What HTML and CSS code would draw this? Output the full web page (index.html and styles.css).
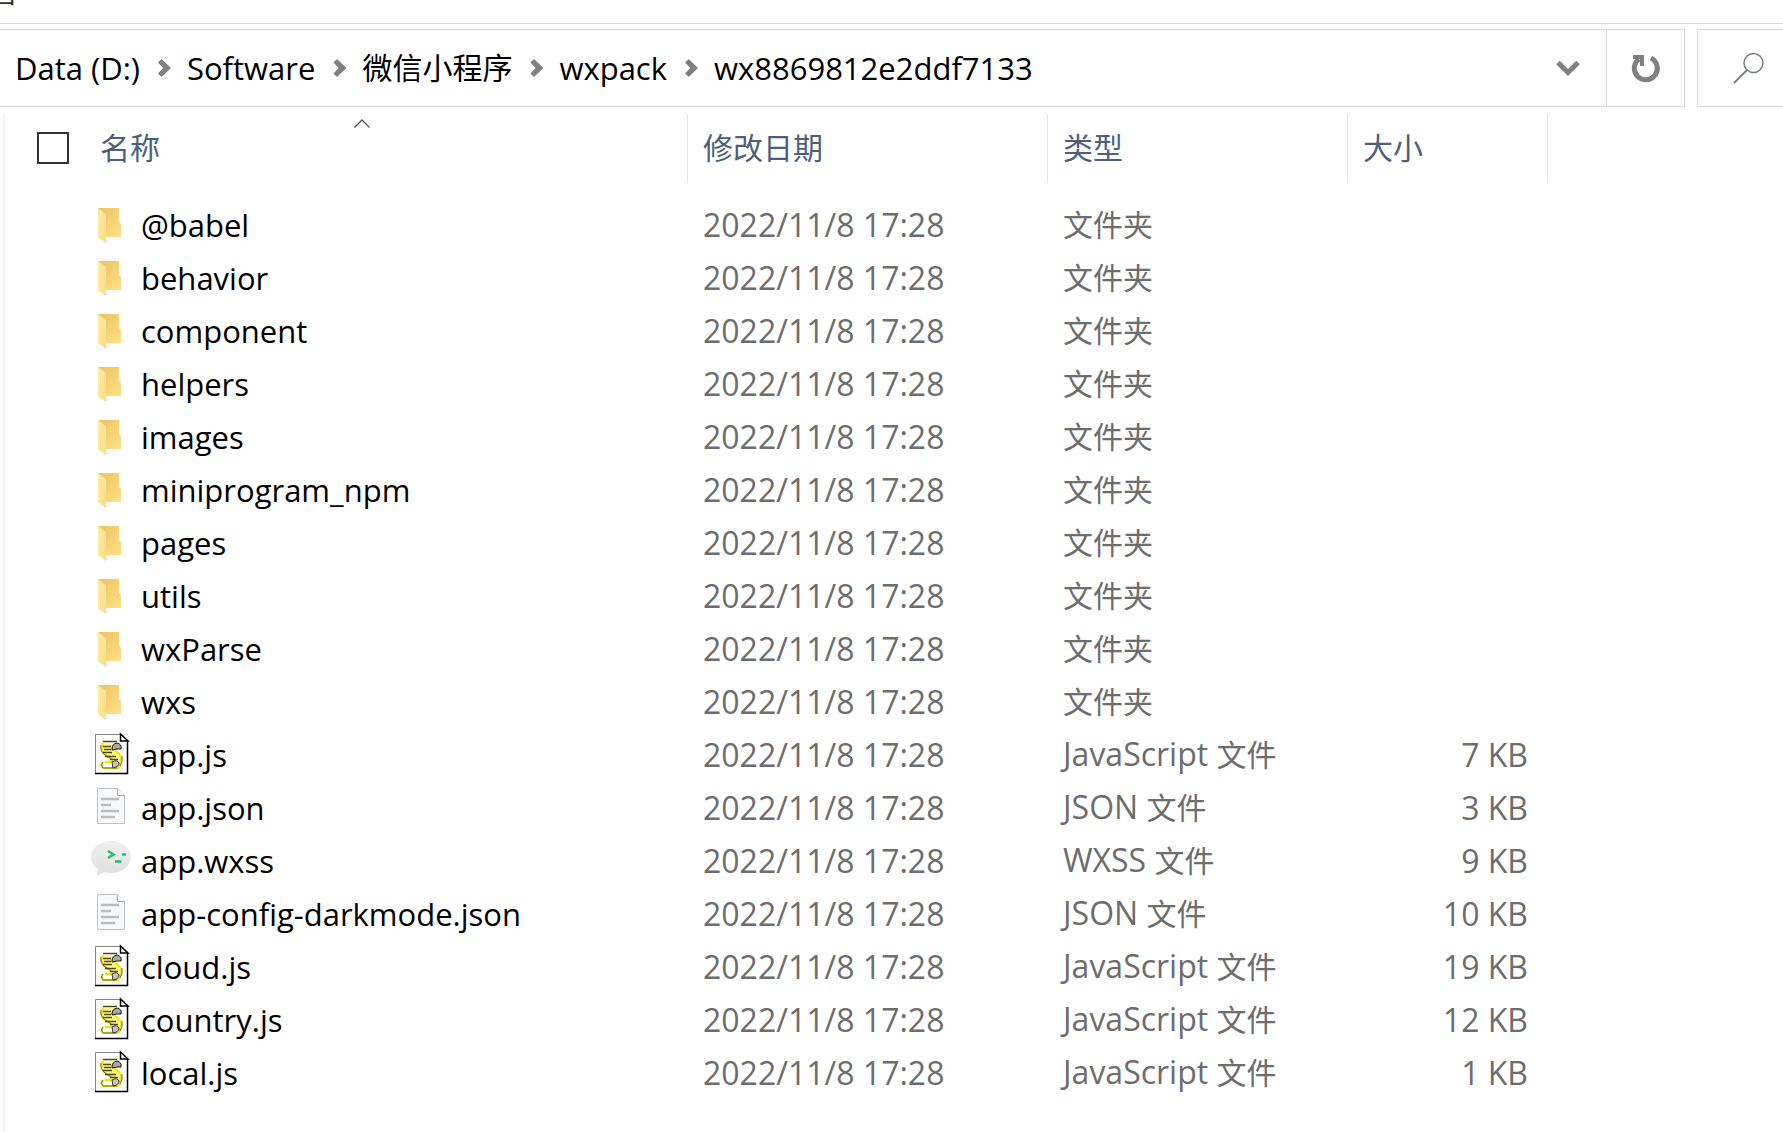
FILE: index.html
```html
<!DOCTYPE html>
<html lang="zh-CN">
<head>
<meta charset="utf-8">
<title>wx8869812e2ddf7133</title>
<link rel="stylesheet" href="styles.css">
</head>
<body>

<!-- icons used by the rows -->
<svg class="defs" aria-hidden="true">
	<defs>
		<linearGradient id="fold-back" x1="0" y1="0" x2="1" y2="1">
			<stop offset="0" stop-color="#ecc35c"/>
			<stop offset="1" stop-color="#ffe08a"/>
		</linearGradient>
		<linearGradient id="fold-front" x1="0" y1="0" x2="1" y2="1">
			<stop offset="0" stop-color="#ffeaa6"/>
			<stop offset="1" stop-color="#fedd83"/>
		</linearGradient>
		<linearGradient id="bubble" x1="0" y1="0" x2="0" y2="1">
			<stop offset="0" stop-color="#efefef"/>
			<stop offset="1" stop-color="#e0e0e0"/>
		</linearGradient>
	</defs>
	<symbol id="folder" viewBox="-1 -3 40 44">
		<path d="M13 36.500l-1 2.500 6-2.500z" fill="#e4e4e4"/>
		<path d="M6 4h21v14l2 2v13H6z" fill="url(#fold-back)"/>
		<path d="M6 4l8 6v28.500l-8-5z" fill="url(#fold-front)"/>
	</symbol>
	<symbol id="script" viewBox="-1 -1 40 44">
		<path d="M4 3h25l7 7v32H4z" fill="#fff"/>
		<path d="M3.500 42V2.500H29" fill="none" stroke="#848484"/>
		<path d="M3 41.500h32.500V9" fill="none" stroke="#000" stroke-width="1.500"/>
		<path d="M28.500 2v7H36z" fill="#fff" stroke="#000" stroke-width="1.500"/>
		<path d="M11 11h14l-4 6 7 5q3 4 1 9l-3 5H12q-4-3-1-6l7-2-8-6q-3-6 1-11z" fill="#fffb8a"/>
		<path d="M11 11q-3 6 1 11l8 5M21 17l6 5q4 4 1 10M11 30q-3 3 0 6h15q3-2 2-6M13 30h10" fill="none" stroke="#f2e600" stroke-width="2"/>
		<path d="M9 13q-1 6 3 9l7 5M11 30q-3 3 0 6h14M30 24q1 6-2 10" fill="none" stroke="#6d6d30"/>
		<path d="M20 17q0-5 5-6 5 1 4 6h-4l-5 1z" fill="#a8a8a8" stroke="#111"/>
		<path d="M12 31h8l1 4h-9q-2-2 0-4z" fill="#fff"/>
		<path d="M20 30q5-3 7 1 0 4-6 5z" fill="#c4c4c4" stroke="#333"/>
		<path d="M11 9.500h14M11 14.500h8M12 17.500h7M11 20.500h9M13 24.500h11M18 27.500h8" fill="none" stroke="#4c4810" stroke-width="1.400"/>
	</symbol>
	<symbol id="text" viewBox="-1 1 40 44">
		<path d="M5.500 5.500h20l7 7v28h-27z" fill="#f8f9fa" stroke="#bfc1c3"/>
		<path d="M25.500 5.500v7h7" fill="#fff" stroke="#a9abad"/>
		<path d="M9 16h18M9 22h10M9 28h18M9 34h14" fill="none" stroke="#bcbcbc" stroke-width="2.500"/>
	</symbol>
	<symbol id="wechat" viewBox="0 1 40 44">
		<path d="M20 5c11 0 20 7 20 16S31 37 20 37q-4 0-7-1l-7 4 1-7C2 30 0 26 0 21 0 12 9 5 20 5z" fill="url(#bubble)"/>
		<path d="M17 15l5.500 3.500L17 22M24 25.500h6.500M31 18.500h4" fill="none" stroke="#19c569" stroke-width="2.500"/>
	</symbol>
</svg>

<div class="ribbon"><span class="tab">查看</span></div>

<div class="toolbar">
	<nav class="address">
		<ol class="crumbs">
			<li><a href="#">Data (D:)</a></li>
			<li><a href="#">Software</a></li>
			<li><a href="#" class="zh">微信小程序</a></li>
			<li><a href="#">wxpack</a></li>
			<li><a href="#">wx8869812e2ddf7133</a></li>
		</ol>
		<button class="drop" aria-label="以前的位置">
			<svg width="24" height="16" viewBox="0 0 24 16"><path d="M2 2.500l10 10 10-10" fill="none" stroke="#808080" stroke-width="5"/></svg>
		</button>
		<button class="refresh" aria-label="刷新">
			<svg width="30" height="30" viewBox="0 0 30 30"><path d="M20 5a11.500 11.500 0 1 1-12 1" fill="none" stroke="#808080" stroke-width="5"/><path d="M2 2h11v11H9V6H2z" fill="#808080"/></svg>
		</button>
	</nav>
	<button class="search" aria-label="搜索">
		<svg width="32" height="32" viewBox="0 0 32 32"><circle cx="20.500" cy="11" r="9.500" fill="none" stroke="#7b8088" stroke-width="1.600"/><path d="M14 18L1 31" stroke="#7b8088" stroke-width="2"/></svg>
	</button>
</div>

<main class="files">
<table>
	<colgroup>
		<col class="c-name"><col class="c-date"><col class="c-type"><col class="c-size"><col>
	</colgroup>
	<thead>
		<tr>
			<th>
				<div class="head">
					<input type="checkbox" aria-label="全选">名称
					<svg class="sort" width="16" height="9" viewBox="0 0 16 9"><path d="M.500 8.500L8 1l7.500 7.500" fill="none" stroke="#555" stroke-width="1.300"/></svg>
				</div>
			</th>
			<th>修改日期</th>
			<th>类型</th>
			<th>大小</th>
			<td></td>
		</tr>
	</thead>
	<tbody>
		<tr><td><a href="#"><svg><use href="#folder"/></svg>@babel</a></td><td>2022/11/8 17:28</td><td><span class="zh">文件夹</span></td><td></td></tr>
		<tr><td><a href="#"><svg><use href="#folder"/></svg>behavior</a></td><td>2022/11/8 17:28</td><td><span class="zh">文件夹</span></td><td></td></tr>
		<tr><td><a href="#"><svg><use href="#folder"/></svg>component</a></td><td>2022/11/8 17:28</td><td><span class="zh">文件夹</span></td><td></td></tr>
		<tr><td><a href="#"><svg><use href="#folder"/></svg>helpers</a></td><td>2022/11/8 17:28</td><td><span class="zh">文件夹</span></td><td></td></tr>
		<tr><td><a href="#"><svg><use href="#folder"/></svg>images</a></td><td>2022/11/8 17:28</td><td><span class="zh">文件夹</span></td><td></td></tr>
		<tr><td><a href="#"><svg><use href="#folder"/></svg>miniprogram_npm</a></td><td>2022/11/8 17:28</td><td><span class="zh">文件夹</span></td><td></td></tr>
		<tr><td><a href="#"><svg><use href="#folder"/></svg>pages</a></td><td>2022/11/8 17:28</td><td><span class="zh">文件夹</span></td><td></td></tr>
		<tr><td><a href="#"><svg><use href="#folder"/></svg>utils</a></td><td>2022/11/8 17:28</td><td><span class="zh">文件夹</span></td><td></td></tr>
		<tr><td><a href="#"><svg><use href="#folder"/></svg>wxParse</a></td><td>2022/11/8 17:28</td><td><span class="zh">文件夹</span></td><td></td></tr>
		<tr><td><a href="#"><svg><use href="#folder"/></svg>wxs</a></td><td>2022/11/8 17:28</td><td><span class="zh">文件夹</span></td><td></td></tr>
		<tr><td><a href="#"><svg><use href="#script"/></svg>app.js</a></td><td>2022/11/8 17:28</td><td>JavaScript <span class="zh">文件</span></td><td>7 KB</td></tr>
		<tr><td><a href="#"><svg><use href="#text"/></svg>app.json</a></td><td>2022/11/8 17:28</td><td>JSON <span class="zh">文件</span></td><td>3 KB</td></tr>
		<tr><td><a href="#"><svg><use href="#wechat"/></svg>app.wxss</a></td><td>2022/11/8 17:28</td><td>WXSS <span class="zh">文件</span></td><td>9 KB</td></tr>
		<tr><td><a href="#"><svg><use href="#text"/></svg>app-config-darkmode.json</a></td><td>2022/11/8 17:28</td><td>JSON <span class="zh">文件</span></td><td>10 KB</td></tr>
		<tr><td><a href="#"><svg><use href="#script"/></svg>cloud.js</a></td><td>2022/11/8 17:28</td><td>JavaScript <span class="zh">文件</span></td><td>19 KB</td></tr>
		<tr><td><a href="#"><svg><use href="#script"/></svg>country.js</a></td><td>2022/11/8 17:28</td><td>JavaScript <span class="zh">文件</span></td><td>12 KB</td></tr>
		<tr><td><a href="#"><svg><use href="#script"/></svg>local.js</a></td><td>2022/11/8 17:28</td><td>JavaScript <span class="zh">文件</span></td><td>1 KB</td></tr>
	</tbody>
</table>
</main>

</body>
</html>
```
FILE: styles.css
```css
* {
	box-sizing: border-box;
}
body {
	margin: 0;
	background: #fff;
	color: #000;
	font-family: "Open Sans", "Noto Sans CJK SC", sans-serif;
	font-size: 32px;
	line-height: 44px;
}
a {
	color: inherit;
	text-decoration: none;
}
button {
	margin: 0;
	padding: 0;
	border: 0;
	background: none;
	display: flex;
	align-items: center;
	justify-content: center;
}
.defs {
	position: absolute;
	width: 0;
	height: 0;
}
.zh {
	font-size: 30px;
}

/* ribbon, only the foot of its tab row shows */
.ribbon {
	height: 24px;
	overflow: hidden;
	border-bottom: 1px solid #dadada;
}
.tab {
	display: block;
	margin-top: -31px;
	margin-left: -42px;
	font-size: 30px;
	color: #333;
}

/* address bar */
.toolbar {
	display: flex;
	gap: 12px;
	margin-top: 5px;
	height: 78px;
}
.address {
	flex: 1;
	display: flex;
	border: 1px solid #d9d9d9;
	border-left: 0;
}
.crumbs {
	flex: 1;
	display: flex;
	align-items: center;
	margin: 0;
	padding: 0 0 0 15px;
	list-style: none;
	font-size: 31px;
}
.crumbs li {
	display: flex;
	align-items: center;
}
.crumbs li + li::before {
	content: "";
	width: 13px;
	height: 18px;
	margin: 0 16px 0 18px;
	background: #808080;
	clip-path: polygon(0 20%, 28% 0, 100% 50%, 28% 100%, 0 80%, 40% 50%);
}
.drop {
	width: 76px;
}
.refresh {
	width: 78px;
	border-left: 1px solid #d9d9d9;
}
.search {
	width: 86px;
	padding-left: 16px;
	border: 1px solid #d9d9d9;
	border-right: 0;
}

/* file list */
.files {
	margin: 7px 0 0 3px;
	min-height: calc(100vh - 114px);
	border-left: 2px solid #f5f5f5;
}
table {
	width: 100%;
	table-layout: fixed;
	border-collapse: separate;
	border-spacing: 0;
}
.c-name {
	width: 683px;
}
.c-date {
	width: 360px;
}
.c-type {
	width: 300px;
}
.c-size {
	width: 200px;
}
th {
	height: 69px;
	padding: 0 0 2px 15px;
	border-right: 1px solid #e5e5e5;
	color: #4c607a;
	font-size: 30px;
	font-weight: normal;
	text-align: left;
}
th:first-child {
	padding-left: 32px;
}
.head {
	position: relative;
	display: flex;
	align-items: center;
}
.sort {
	position: absolute;
	top: -7px;
	right: 317px;
}
input[type=checkbox] {
	appearance: none;
	width: 32px;
	height: 32px;
	margin: 0 31px 0 0;
	border: 2px solid #333;
}
tbody::before {
	content: "";
	display: block;
	height: 15px;
}
tbody td {
	height: 53px;
	padding: 0 0 0 15px;
	color: #6d6d6d;
	white-space: nowrap;
}
tbody td:first-child {
	padding-left: 86px;
	color: #000;
	font-size: 31px;
}
tbody td:nth-child(4) {
	padding-right: 20px;
	text-align: right;
}
tbody a {
	display: flex;
	align-items: center;
	gap: 10px;
}
tbody svg {
	width: 40px;
	height: 44px;
	margin-bottom: 4px;
}
```
